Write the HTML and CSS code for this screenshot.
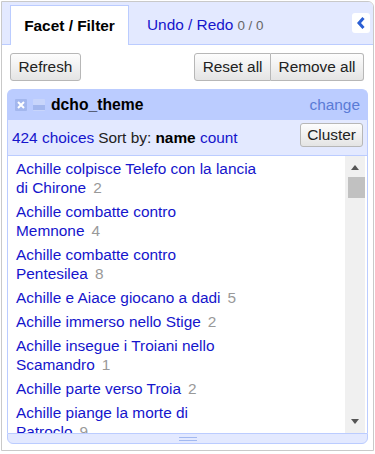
FILE: index.html
```html
<!DOCTYPE html>
<html>
<head>
<meta charset="utf-8">
<link rel="stylesheet" href="styles.css">
</head>
<body>
<div class="panel">
  <div class="tabs">
    <div class="tab active">Facet / Filter</div>
    <div class="tab">Undo / Redo <span class="hist">0 / 0</span></div>
    <div class="collapse">
      <svg width="10" height="14" viewBox="0 0 10 14"><path d="M7.5 2 L3 7 L7.5 12" stroke="#2b5fd3" stroke-width="3" fill="none"/></svg>
    </div>
  </div>
  <div class="toolbar">
    <button class="btn">Refresh</button>
    <div class="btn-group"><button class="btn">Reset all</button><button class="btn">Remove all</button></div>
  </div>
  <div class="facet">
    <div class="facet-title">
      <svg class="ficon" width="12" height="12" viewBox="0 0 12 12"><rect width="12" height="12" rx="1" fill="#a3b7ee"/><path d="M3 3 L9 9 M9 3 L3 9" stroke="#fff" stroke-width="2"/></svg>
      <svg class="ficon" width="12" height="12" viewBox="0 0 12 12"><rect width="12" height="12" rx="1" fill="#c8d5fb"/><rect x="0" y="6" width="12" height="5" fill="#a3b7ee"/></svg>
      <span class="facet-name">dcho_theme</span>
      <a class="change">change</a>
    </div>
    <div class="facet-controls">
      <a class="link">424 choices</a><span class="sort">Sort by: <b>name</b> <a class="link">count</a></span>
      <button class="btn cluster">Cluster</button>
    </div>
    <div class="facet-body">
      <div class="choices">
        <div class="choice"><a class="label">Achille colpisce Telefo con la lancia di Chirone</a><span class="count">2</span></div>
        <div class="choice"><a class="label">Achille combatte contro Memnone</a><span class="count">4</span></div>
        <div class="choice"><a class="label">Achille combatte contro Pentesilea</a><span class="count">8</span></div>
        <div class="choice"><a class="label">Achille e Aiace giocano a dadi</a><span class="count">5</span></div>
        <div class="choice"><a class="label">Achille immerso nello Stige</a><span class="count">2</span></div>
        <div class="choice"><a class="label">Achille insegue i Troiani nello Scamandro</a><span class="count">1</span></div>
        <div class="choice"><a class="label">Achille parte verso Troia</a><span class="count">2</span></div>
        <div class="choice"><a class="label">Achille piange la morte di Patroclo</a><span class="count">9</span></div>
      </div>
      <div class="scrollbar">
        <div class="arrow-up"></div>
        <div class="thumb"></div>
        <div class="track-space"></div>
        <div class="arrow-down"></div>
      </div>
    </div>
    <div class="facet-handle"><div class="grip"></div></div>
  </div>
</div>
</body>
</html>
```
FILE: styles.css
```css
html, body {
  margin: 0;
  background: #fff;
}
body {
  font-family: "Liberation Sans", Arial, sans-serif;
  font-size: 15.4px;
  color: #222;
}
.panel {
  margin: 1px 0 0 1px;
  width: 371px;
  height: 448px;
  border: 1px solid #c9c9c9;
  border-top-right-radius: 6px;
  overflow: hidden;
  display: flex;
  flex-direction: column;
}
.tabs {
  display: flex;
  align-items: flex-end;
  height: 42px;
  background: #e3e9ff;
  border-bottom: 1px solid #bbccff;
  padding-left: 8px;
  flex-shrink: 0;
}
.tab {
  height: 40px;
  margin-bottom: -1px;
  display: flex;
  align-items: center;
  box-sizing: border-box;
  color: #1515cc;
  padding-left: 18px;
}
.tab.active {
  width: 119px;
  padding: 0;
  justify-content: center;
  background: #fff;
  border: 1px solid #bbccff;
  border-bottom: none;
  font-weight: bold;
  color: #000;
}
.hist {
  font-size: 13.4px;
  color: #666;
  margin-left: 4px;
}
.collapse {
  align-self: flex-start;
  margin: 11px 3px 0 auto;
  width: 18px;
  height: 20px;
  background: #fff;
  border-radius: 3px;
  display: flex;
  align-items: center;
  justify-content: center;
}
.toolbar {
  display: flex;
  justify-content: space-between;
  padding: 8px 9px 0 8px;
}
.btn {
  height: 28px;
  padding: 0 7.5px;
  border: 1px solid #b7b7b7;
  border-radius: 3px;
  background: linear-gradient(#fdfdfd, #e4e4e4);
  font: inherit;
  color: #222;
  margin: 0;
}
.btn-group {
  display: flex;
}
.btn-group .btn:first-child {
  border-top-right-radius: 0;
  border-bottom-right-radius: 0;
}
.btn-group .btn:last-child {
  border-left: none;
  border-top-left-radius: 0;
  border-bottom-left-radius: 0;
}
.facet {
  margin: 8px 5px 0 5px;
  display: flex;
  flex-direction: column;
}
.facet-title {
  height: 30px;
  background: #bbccff;
  border: 1px solid #bbccff;
  border-bottom: none;
  border-radius: 6px 6px 0 0;
  display: flex;
  align-items: center;
  padding: 0 7px;
}
.ficon {
  display: block;
  width: 12px;
  height: 12px;
  margin-right: 6px;
  flex-shrink: 0;
}
.facet-name {
  font-weight: bold;
  color: #000;
  font-size: 15.7px;
}
.change {
  margin-left: auto;
  color: #5a7bd6;
}
.facet-controls {
  height: 35px;
  background: #e3e9ff;
  border-left: 1px solid #bbccff;
  border-right: 1px solid #bbccff;
  display: flex;
  align-items: center;
  padding: 0 4px;
}
.link {
  color: #1515cc;
}
.sort {
  margin-left: 4px;
  color: #222;
}
.sort b {
  color: #000;
}
.cluster {
  height: 24px;
  padding: 0 6px;
  margin: 0 0 5px auto;
}
.facet-body {
  display: flex;
  height: 277px;
  border: 1px solid #bbccff;
  border-bottom: none;
}
.choices {
  flex: 1;
  overflow: hidden;
  padding-left: 8px;
}
.choice {
  width: 246px;
  padding: 2.5px 0;
  line-height: 19px;
}
.label {
  color: #1515cc;
}
.count {
  color: #999;
  margin-left: 7px;
}
.scrollbar {
  width: 20px;
  margin-right: 2px;
  background: #f0f0f0;
  display: flex;
  flex-direction: column;
  align-items: center;
}
.arrow-up {
  margin-top: 9px;
  width: 0;
  height: 0;
  border-left: 4.5px solid transparent;
  border-right: 4.5px solid transparent;
  border-bottom: 5px solid #555;
}
.thumb {
  margin-top: 7px;
  align-self: flex-end;
  width: 17px;
  height: 21px;
  background: #c1c1c1;
}
.track-space {
  flex: 1;
}
.arrow-down {
  margin-bottom: 9px;
  width: 0;
  height: 0;
  border-left: 4.5px solid transparent;
  border-right: 4.5px solid transparent;
  border-top: 5px solid #555;
}
.facet-handle {
  height: 9px;
  background: #e3e9ff;
  border: 1px solid #bbccff;
  border-radius: 0 0 6px 6px;
  display: flex;
  align-items: center;
  justify-content: center;
}
.grip {
  width: 18px;
  height: 2px;
  border-top: 1px solid #a3b9f0;
  border-bottom: 1px solid #a3b9f0;
}
```
